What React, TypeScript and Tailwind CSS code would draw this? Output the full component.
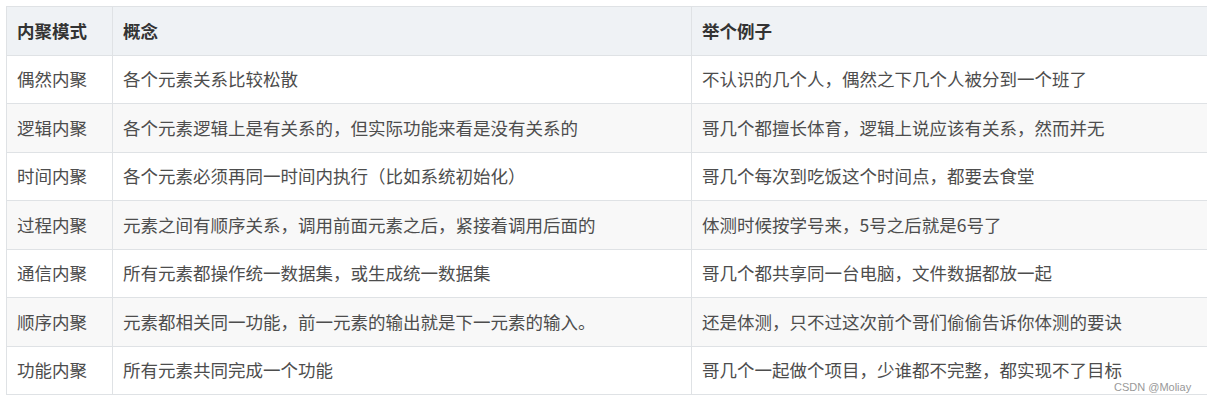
import React from 'react';

const rows: [string, string, string][] = [
  ['偶然内聚', '各个元素关系比较松散', '不认识的几个人，偶然之下几个人被分到一个班了'],
  ['逻辑内聚', '各个元素逻辑上是有关系的，但实际功能来看是没有关系的', '哥几个都擅长体育，逻辑上说应该有关系，然而并无'],
  ['时间内聚', '各个元素必须再同一时间内执行（比如系统初始化）', '哥几个每次到吃饭这个时间点，都要去食堂'],
  ['过程内聚', '元素之间有顺序关系，调用前面元素之后，紧接着调用后面的', '体测时候按学号来，5号之后就是6号了'],
  ['通信内聚', '所有元素都操作统一数据集，或生成统一数据集', '哥几个都共享同一台电脑，文件数据都放一起'],
  ['顺序内聚', '元素都相关同一功能，前一元素的输出就是下一元素的输入。', '还是体测，只不过这次前个哥们偷偷告诉你体测的要诀'],
  ['功能内聚', '所有元素共同完成一个功能', '哥几个一起做个项目，少谁都不完整，都实现不了目标'],
];

const font = { fontFamily: '"Microsoft YaHei", "Noto Sans CJK SC", "Noto Sans", sans-serif' };

export default function App() {
  return (
    <div className="relative w-[1207px] h-[403px] overflow-hidden bg-white text-[#4d4d4d] text-[17.5px]" style={font}>
      <div className="absolute left-[6px] top-[6px] w-[1230px] border-t border-l border-[#dfe2e5]">
        {/* header */}
        <div className="grid grid-cols-[106px_579px_1fr] h-[49px] bg-[#eff2f5] border-b border-[#dfe2e5] font-bold text-[#333]">
          <div className="flex items-center pl-[10px] border-r border-[#dfe2e5]">内聚模式</div>
          <div className="flex items-center pl-[10px] border-r border-[#dfe2e5]">概念</div>
          <div className="flex items-center pl-[10px]">举个例子</div>
        </div>
        {rows.map(([a, b, c], i) => (
          <div
            key={a}
            className={
              'grid grid-cols-[106px_579px_1fr] border-b border-[#dfe2e5] ' +
              (i % 2 === 0 ? 'h-[48px] bg-white' : 'h-[49px] bg-[#f8f8f8]')
            }
          >
            <div className="flex items-center pl-[10px] border-r border-[#dfe2e5]">{a}</div>
            <div className="flex items-center pl-[10px] border-r border-[#dfe2e5]">{b}</div>
            <div className="flex items-center pl-[10px]">{c}</div>
          </div>
        ))}
      </div>
      <span
        className="absolute left-[1114px] top-[379px] text-[11px] text-[#999]"
        style={{ fontFamily: '"Liberation Sans", Arial, sans-serif' }}
      >
        CSDN @Moliay
      </span>
    </div>
  );
}
